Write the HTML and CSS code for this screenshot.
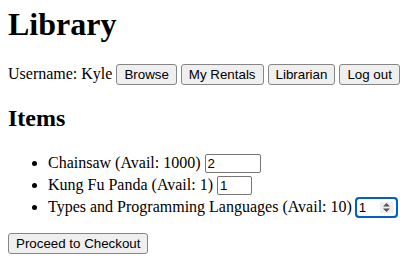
FILE: index.html
```html
<!DOCTYPE html>
<html>
  <head>
    <meta charset="utf-8" />
    <title>Library</title>
    <link rel="stylesheet" href="styles.css">
  </head>
  <body>
    <h1>Library</h1>
    <div class="user-bar">
      Username: Kyle
      <button>Browse</button>
      <button>My Rentals</button>
      <button>Librarian</button>
      <button>Log out</button>
    </div>

    <h2>Items</h2>
    <ul class="items">
      <li>Chainsaw (Avail: 1000) <input type="text" class="qty qty-wide" value="2" /></li>
      <li>Kung Fu Panda (Avail: 1) <input type="text" class="qty qty-small" value="1" /></li>
      <li>
        Types and Programming Languages (Avail: 10)
        <span class="spin-box">
          <input type="text" class="qty qty-focus" value="1" />
          <svg class="spinner" width="9" height="11" viewBox="0 0 9 11">
            <path d="M1 4.5 L4.5 1 L8 4.5 Z M1 6.5 L4.5 10 L8 6.5 Z" fill="#555" />
          </svg>
        </span>
      </li>
    </ul>
    <button>Proceed to Checkout</button>
  </body>
</html>
```

FILE: styles.css
```css
body {
  margin: 0 8px;
  font-family: "Liberation Serif", "Times New Roman", serif;
  font-size: 16px;
  color: #000;
  background: #fff;
}
h1 {
  font-size: 32px;
  margin: 6px 0 21px;
}
h2 {
  font-size: 24px;
  margin: 20px 0;
}
button {
  font-family: "Liberation Sans", Arial, sans-serif;
  font-size: 13.33px;
  padding: 2px 7px;
  background-color: #efefef;
  border: 1px solid #858585;
  border-radius: 3px;
  color: #000;
}
.items {
  margin: 18px 0 15px;
  padding-left: 40px;
}
.items li {
  line-height: 22px;
}
.qty {
  font-family: "Liberation Sans", Arial, sans-serif;
  font-size: 13.33px;
  line-height: normal;
  padding: 1px 2px;
  border: 1px solid #767676;
  border-radius: 2px;
  box-sizing: border-box;
  height: 19px;
}
.qty-wide {
  width: 56px;
}
.qty-small {
  width: 35px;
}
.spin-box {
  position: relative;
  display: inline-block;
  line-height: normal;
}
.qty-focus {
  width: 41px;
  outline: 2px solid #005fcc;
  outline-offset: -1px;
  border-radius: 3px;
}
.spinner {
  position: absolute;
  right: 4px;
  top: 4px;
  background: #efefef;
  padding: 0 2px;
}
```
